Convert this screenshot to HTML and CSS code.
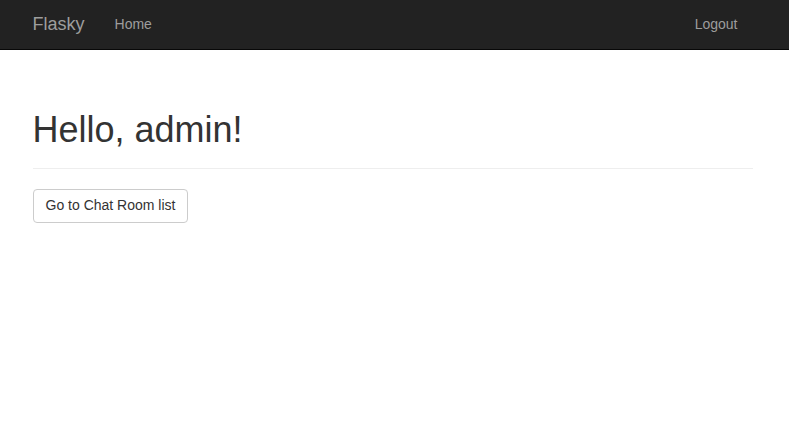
FILE: index.html
```html
<!DOCTYPE html>
<html>
<head>
<meta charset="utf-8">
<title>Flasky</title>
<link rel="stylesheet" href="styles.css">
</head>
<body>
<nav class="navbar">
  <div class="container nav-inner">
    <div class="nav-left">
      <a class="brand" href="#">Flasky</a>
      <a class="nav-link" href="#">Home</a>
    </div>
    <div class="nav-right">
      <a class="nav-link" href="#">Logout</a>
    </div>
  </div>
</nav>
<main class="container main">
  <div class="page-header">
    <h1>Hello, admin!</h1>
  </div>
  <a class="btn" href="#">Go to Chat Room list</a>
</main>
</body>
</html>
```
FILE: styles.css
```css
* { box-sizing: border-box; }
html, body { margin: 0; padding: 0; }
body {
  font-family: "Liberation Sans", Arial, sans-serif;
  font-size: 14px;
  line-height: 1.42857;
  color: #333;
  background: #fff;
}
a { text-decoration: none; }
.container {
  width: 750px;
  margin: 0 auto;
  padding: 0 17px 0 13px;
}
.navbar {
  background: #222;
  border-bottom: 1px solid #080808;
  height: 50px;
}
.nav-inner {
  display: flex;
  justify-content: space-between;
  height: 49px;
}
.nav-left, .nav-right { display: flex; }
.nav-left { margin-left: -15px; }
.brand {
  color: #9d9d9d;
  font-size: 18px;
  line-height: 20px;
  padding: 14px 15px 15px;
}
.nav-link {
  color: #9d9d9d;
  font-size: 14px;
  line-height: 20px;
  padding: 14px 15px 15px;
}
.main {
  padding-top: 20px;
}
.page-header {
  margin: 40px 0 20px;
  padding-bottom: 8px;
  border-bottom: 1px solid #eee;
}
.page-header h1 {
  margin: 0 0 10px;
  font-size: 36px;
  font-weight: 500;
  line-height: 1.1;
}
.btn {
  display: inline-block;
  padding: 6px 12px;
  font-size: 14px;
  line-height: 1.42857;
  color: #333;
  background: #fff;
  border: 1px solid #ccc;
  border-radius: 4px;
}
```
